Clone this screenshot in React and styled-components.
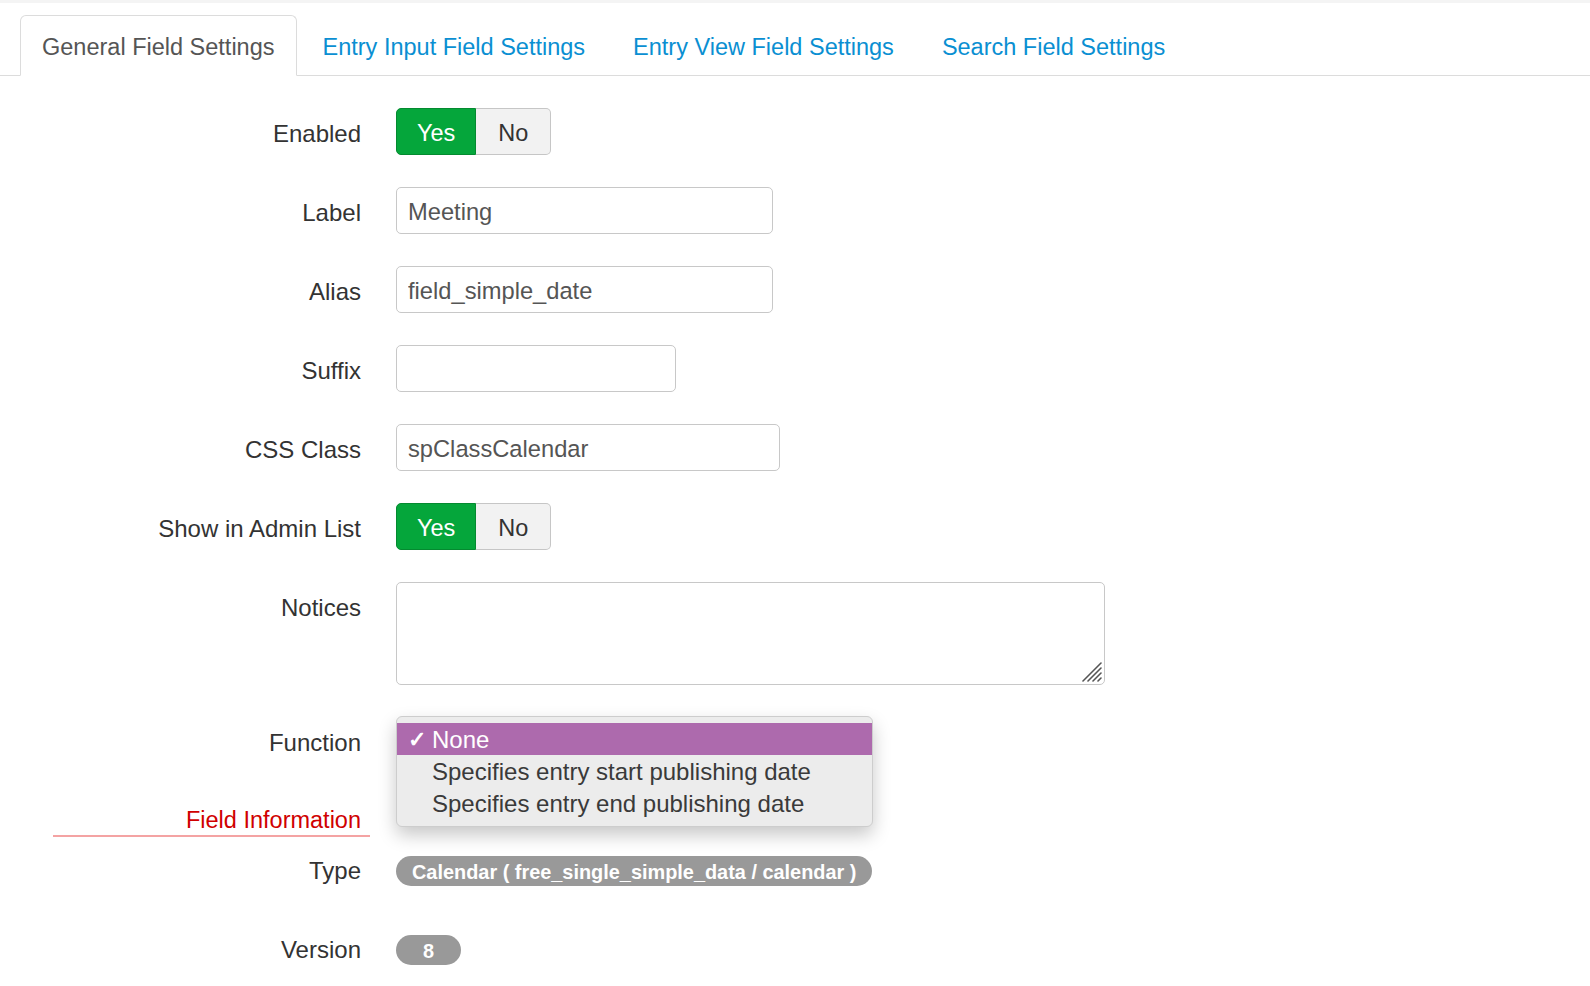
import React from "react";
import styled, { createGlobalStyle } from "styled-components";

// Base page styles
const GlobalStyle = createGlobalStyle`
  html, body {
    margin: 0;
    padding: 0;
    background: #fff;
  }
  body {
    font-family: "Liberation Sans", Arial, Helvetica, sans-serif;
    color: #333;
  }
  * {
    box-sizing: border-box;
  }
`;

const tabs = [
  "General Field Settings",
  "Entry Input Field Settings",
  "Entry View Field Settings",
  "Search Field Settings",
];

const functionOptions = [
  "None",
  "Specifies entry start publishing date",
  "Specifies entry end publishing date",
];

// Page wrapper
const Page = styled.div`
  border-top: 3px solid #f4f4f4;
  min-height: 100vh;
`;

// Tab strip
const TabBar = styled.ul`
  display: flex;
  margin: 12px 0 0;
  padding: 0 0 0 20px;
  list-style: none;
  border-bottom: 1px solid #dcdcdc;
`;

const Tab = styled.li`
  height: 61px;
  margin-right: 4px;
  margin-bottom: -1px;
  padding: 3px 21px 0;
  display: flex;
  align-items: center;
  font-size: 23.5px;
  color: ${(p) => (p.$active ? "#555" : "#0a8fd2")};
  background: ${(p) => (p.$active ? "#fff" : "transparent")};
  border: 1px solid ${(p) => (p.$active ? "#dcdcdc" : "transparent")};
  border-bottom-color: ${(p) => (p.$active ? "#fff" : "transparent")};
  border-radius: 6px 6px 0 0;
  cursor: pointer;
`;

// Form body
const Form = styled.div`
  padding-top: 32px;
`;

const Row = styled.div`
  display: flex;
  align-items: ${(p) => (p.$top ? "flex-start" : "center")};
  min-height: 47px;
  margin-bottom: ${(p) => (p.$flush ? "0" : "32px")};
`;

const Label = styled.label`
  width: 361px;
  height: 47px;
  flex-shrink: 0;
  margin-right: 35px;
  padding-top: ${(p) => (p.$low ? "0" : "4px")};
  text-align: right;
  font-size: 24px;
  line-height: ${(p) => (p.$low ? "47px" : "43px")};
  color: #333;
`;

// Yes / No toggle
const ToggleGroup = styled.div`
  display: flex;
`;

const ToggleButton = styled.button`
  height: 47px;
  padding: 3px ${(p) => (p.$on ? "20px" : "22px")} 0;
  font-family: inherit;
  font-size: 23.5px;
  color: ${(p) => (p.$on ? "#fff" : "#333")};
  background: ${(p) => (p.$on ? "#05a63b" : "#f2f2f2")};
  border: 1px solid ${(p) => (p.$on ? "#048a30" : "#c6c6c6")};
  border-radius: ${(p) => (p.$on ? "5px 0 0 5px" : "0 5px 5px 0")};
  ${(p) => (p.$on ? "" : "border-left: none;")}
  cursor: pointer;
`;

const TextInput = styled.input`
  width: ${(p) => p.$width}px;
  height: 47px;
  padding: 4px 11px 0;
  font-family: inherit;
  font-size: 23.7px;
  color: #555;
  background: #fff;
  border: 1px solid #c8c8c8;
  border-radius: 5px;
  outline: none;
`;

const AreaWrap = styled.div`
  position: relative;
  width: 709px;
  height: 103px;
`;

const TextArea = styled.textarea`
  display: block;
  width: 100%;
  height: 100%;
  padding: 8px 11px;
  font-family: inherit;
  font-size: 23.5px;
  color: #555;
  border: 1px solid #c8c8c8;
  border-radius: 5px;
  outline: none;
  resize: none;
`;

// Resize grip drawn over the textarea corner
const Grip = styled.svg`
  position: absolute;
  right: 3px;
  bottom: 3px;
  pointer-events: none;
`;

// Function select with its open menu
const SelectWrap = styled.div`
  position: relative;
  width: 477px;
  height: 47px;
`;

const Menu = styled.ul`
  position: absolute;
  top: -1px;
  left: 0;
  width: 477px;
  margin: 0;
  padding: 6px 0 7px;
  list-style: none;
  background: #ececec;
  border: 1px solid #cdcdcd;
  border-radius: 6px;
  box-shadow: 0 8px 18px rgba(0, 0, 0, 0.22);
  z-index: 2;
`;

const MenuItem = styled.li`
  position: relative;
  height: 32px;
  line-height: 34px;
  padding-left: 35px;
  font-size: 24px;
  color: ${(p) => (p.$selected ? "#fff" : "#3a3a3a")};
  background: ${(p) => (p.$selected ? "#ad6aad" : "transparent")};
`;

const Check = styled.span`
  position: absolute;
  left: 11px;
  top: 0;
  font-size: 22px;
  font-weight: bold;
`;

// Section heading
const SectionHeading = styled.div`
  width: 317px;
  margin: 39px 0 10px 53px;
  padding: 2px 9px 0 0;
  text-align: right;
  font-size: 23.5px;
  line-height: 30px;
  color: #d00000;
  border-bottom: 2px solid #f4a3a3;
`;

const Badge = styled.span`
  display: inline-block;
  min-width: ${(p) => (p.$min ? `${p.$min}px` : "0")};
  height: 30px;
  padding: 1px 16px 0;
  line-height: 30px;
  text-align: center;
  font-size: 19.9px;
  font-weight: bold;
  color: #fff;
  background: #999;
  border-radius: 15px;
`;

export default function App() {
  return (
    <Page>
      <GlobalStyle />
      <TabBar>
        {tabs.map((t, i) => (
          <Tab key={t} $active={i === 0}>
            {t}
          </Tab>
        ))}
      </TabBar>

      <Form>
        <Row>
          <Label>Enabled</Label>
          <ToggleGroup>
            <ToggleButton $on>Yes</ToggleButton>
            <ToggleButton>No</ToggleButton>
          </ToggleGroup>
        </Row>
        <Row>
          <Label>Label</Label>
          <TextInput $width={377} defaultValue="Meeting" />
        </Row>
        <Row>
          <Label>Alias</Label>
          <TextInput $width={377} defaultValue="field_simple_date" />
        </Row>
        <Row>
          <Label>Suffix</Label>
          <TextInput $width={280} defaultValue="" />
        </Row>
        <Row>
          <Label>CSS Class</Label>
          <TextInput $width={384} defaultValue="spClassCalendar" />
        </Row>
        <Row>
          <Label>Show in Admin List</Label>
          <ToggleGroup>
            <ToggleButton $on>Yes</ToggleButton>
            <ToggleButton>No</ToggleButton>
          </ToggleGroup>
        </Row>
        <Row $top>
          <Label>Notices</Label>
          <AreaWrap>
            <TextArea />
            <Grip width="22" height="22" viewBox="0 0 22 22">
              <g stroke="#555" strokeWidth="1.6" strokeLinecap="round">
                <line x1="21" y1="3" x2="3" y2="21" />
                <line x1="21" y1="8" x2="8" y2="21" />
                <line x1="21" y1="13" x2="13" y2="21" />
                <line x1="21" y1="18" x2="18" y2="21" />
              </g>
            </Grip>
          </AreaWrap>
        </Row>
        <Row $flush>
          <Label>Function</Label>
          <SelectWrap>
            <Menu>
              {functionOptions.map((o, i) => (
                <MenuItem key={o} $selected={i === 0}>
                  {i === 0 && <Check>✓</Check>}
                  {o}
                </MenuItem>
              ))}
            </Menu>
          </SelectWrap>
        </Row>

        <SectionHeading>Field Information</SectionHeading>

        <Row>
          <Label $low>Type</Label>
          <Badge>Calendar ( free_single_simple_data / calendar )</Badge>
        </Row>
        <Row>
          <Label $low>Version</Label>
          <Badge $min={65}>8</Badge>
        </Row>
      </Form>
    </Page>
  );
}
